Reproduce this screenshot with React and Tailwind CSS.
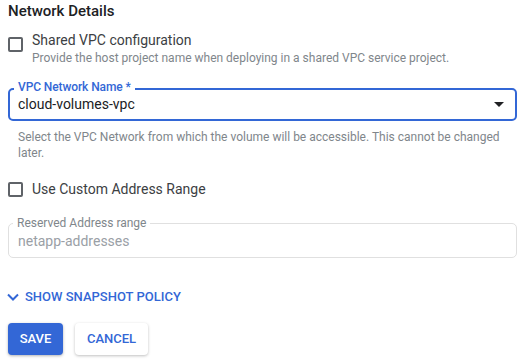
import React, { useState } from 'react';

const Checkbox = ({ checked, onChange }) => (
  <button
    type="button"
    onClick={onChange}
    className="w-[15px] h-[15px] rounded-[2px] border-2 border-[#5f6368] bg-white flex-shrink-0 cursor-pointer"
    aria-pressed={checked}
  />
);

export default function App() {
  const [shared, setShared] = useState(false);
  const [custom, setCustom] = useState(false);

  return (
    <div className="w-[525px] h-[363px] bg-white px-2 font-['Roboto',sans-serif] overflow-hidden">
      {/* Title */}
      <h2 className="text-[15px] leading-[20px] font-medium text-[#202124] pt-[1px]">Network Details</h2>

      {/* Shared VPC */}
      <div className="mt-[9px] flex items-start gap-[9px]">
        <div className="pt-[3px]">
          <Checkbox checked={shared} onChange={() => setShared(!shared)} />
        </div>
        <div>
          <div className="text-[14px] leading-[20px] text-[#3c4043]">Shared VPC configuration</div>
          <div className="text-[12px] leading-[16px] text-[#80868b]">
            Provide the host project name when deploying in a shared VPC service project.
          </div>
        </div>
      </div>

      {/* VPC Network select */}
      <div className="mt-[22px] relative">
        <div className="h-[33px] border-2 border-[#3367d6] rounded-[5px] flex items-center pl-[8px] pr-[11px]">
          <span className="flex-1 text-[14px] text-[#202124]">cloud-volumes-vpc</span>
          <svg width="10" height="5" viewBox="0 0 10 5" className="text-[#202124]">
            <path d="M0 0 L10 0 L5 5 Z" fill="currentColor" />
          </svg>
        </div>
        <span className="absolute left-[6px] -top-[9px] bg-white px-[4px] text-[12px] leading-[16px] font-medium tracking-[-0.1px] text-[#3367d6]">
          VPC Network Name *
        </span>
      </div>
      <p className="mt-[8px] pl-[10px] pr-[14px] text-[12px] leading-[16px] text-[#80868b]">
        Select the VPC Network from which the volume will be accessible. This cannot be changed later.
      </p>

      {/* Custom address range */}
      <div className="mt-[18px] flex items-center gap-[9px]">
        <Checkbox checked={custom} onChange={() => setCustom(!custom)} />
        <span className="text-[14px] leading-[20px] text-[#3c4043]">Use Custom Address Range</span>
      </div>

      <div className="mt-[24px] relative">
        <div className="h-[35px] border border-[#e0e0e0] rounded-[5px] flex items-center pl-[9px] pt-[1px]">
          <span className="text-[14px] text-[#9aa0a6]">netapp-addresses</span>
        </div>
        <span className="absolute left-[5px] -top-[8px] bg-white px-[4px] text-[12px] leading-[16px] text-[#80868b]">
          Reserved Address range
        </span>
      </div>

      {/* Snapshot policy toggle */}
      <button type="button" className="mt-[31px] flex items-center gap-[6px] text-[#3367d6] cursor-pointer">
        <svg width="12" height="8" viewBox="0 0 12 8" className="ml-[-1px]">
          <path d="M1 1.5 L6 6.5 L11 1.5" stroke="currentColor" strokeWidth="2" fill="none" />
        </svg>
        <span className="text-[13px] leading-[16px] font-medium">SHOW SNAPSHOT POLICY</span>
      </button>

      {/* Actions */}
      <div className="mt-[18px] flex gap-[12px]">
        <button type="button" className="w-[55px] h-[32px] rounded-[4px] bg-[#3367d6] text-white text-[13px] font-medium shadow-[0_1px_3px_rgba(0,0,0,0.3)]">
          SAVE
        </button>
        <button type="button" className="w-[73px] h-[32px] rounded-[4px] bg-white text-[#3367d6] text-[13px] font-medium shadow-[0_1px_3px_rgba(0,0,0,0.25)]">
          CANCEL
        </button>
      </div>
    </div>
  );
}
